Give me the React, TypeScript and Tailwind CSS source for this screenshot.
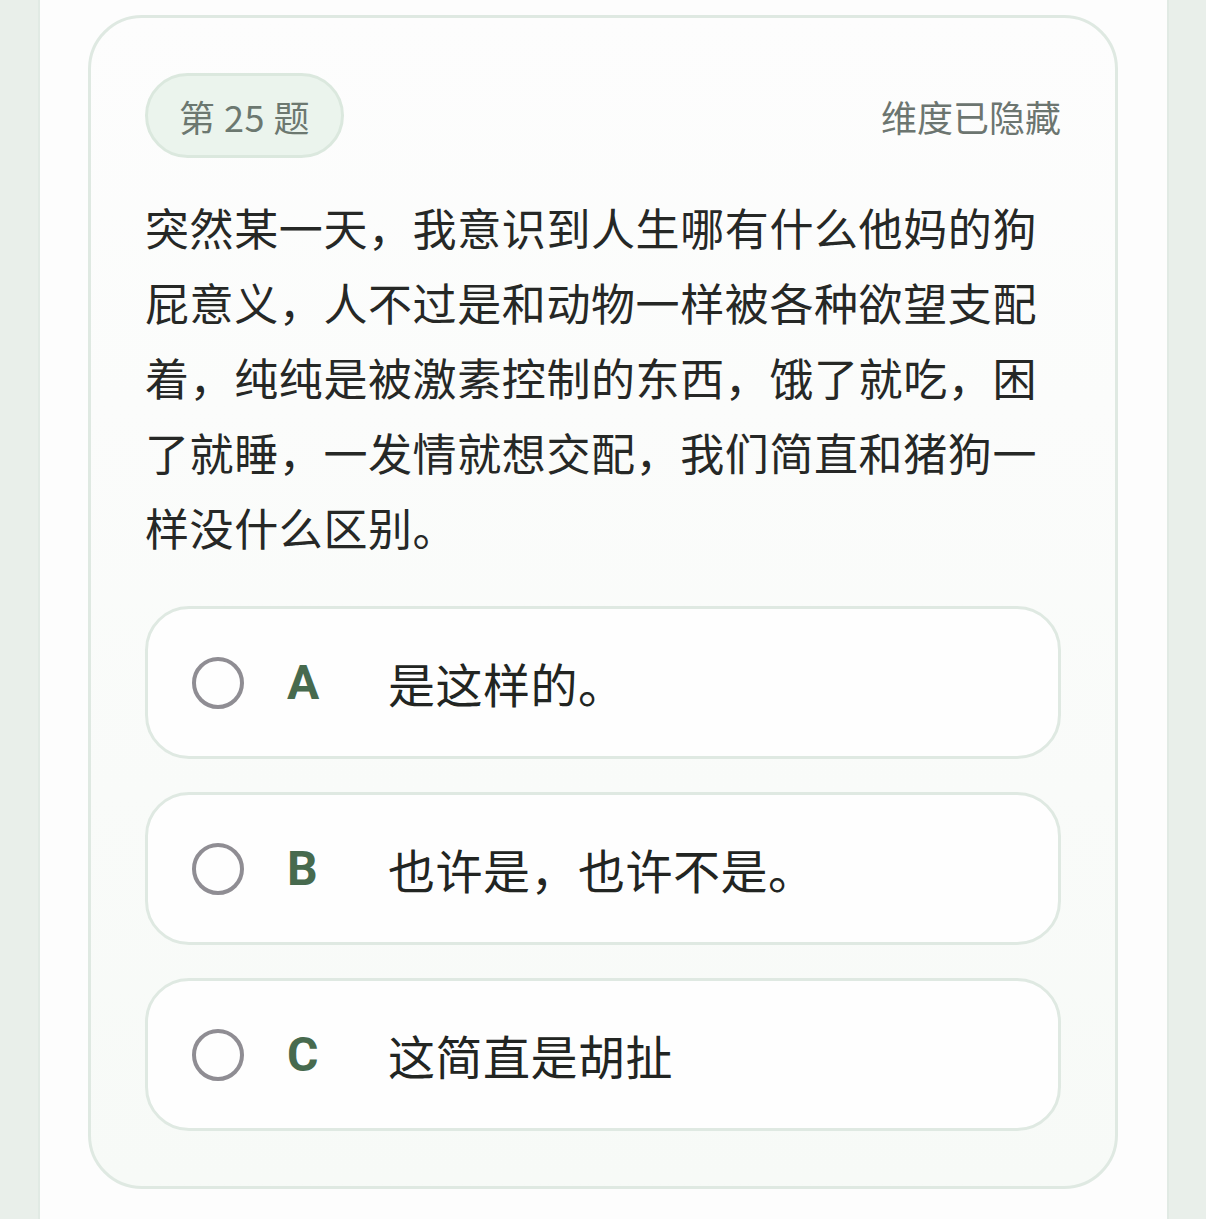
const options = [
  { key: "A", text: "是这样的。" },
  { key: "B", text: "也许是，也许不是。" },
  { key: "C", text: "这简直是胡扯" },
];

const question =
  "突然某一天，我意识到人生哪有什么他妈的狗屁意义，人不过是和动物一样被各种欲望支配着，纯纯是被激素控制的东西，饿了就吃，困了就睡，一发情就想交配，我们简直和猪狗一样没什么区别。";

function OptionRow({ letter, text }: { letter: string; text: string }) {
  return (
    <button
      type="button"
      className="flex h-[153px] w-full items-center rounded-[44px] border-[3px] border-[#dfe9e2] bg-[#fefefe] pl-[44px] text-left"
    >
      <span className="h-[52px] w-[52px] shrink-0 rounded-full border-[4px] border-[#8f8d93]" />
      <span className="ml-[43px] w-[101px] shrink-0 font-['Roboto','Liberation_Sans',sans-serif] text-[48px] font-bold leading-none text-[#476a4e]">
        {letter}
      </span>
      <span className="text-[47px] leading-none tracking-[0.5px] text-[#222522]">{text}</span>
    </button>
  );
}

export default function App() {
  return (
    <div className="min-h-[1219px] bg-[#e9efea] font-['Noto_Sans_CJK_SC','Noto_Sans',sans-serif]">
      <div className="mx-auto min-h-[1219px] w-[1131px] border-x-2 border-[#e1eae4] bg-[#fdfdfd] pt-[15px]">
        <div className="mx-auto w-[1030px] rounded-[54px] border-[3px] border-[#dfe9e2] bg-gradient-to-b from-[#fdfdfd] to-[#f7faf7] px-[54px] pb-[55px] pt-[55px]">
          <div className="flex items-center justify-between">
            <span className="flex h-[85px] items-center rounded-full border-[3px] border-[#dbe8de] bg-[#ebf4ed] px-[31px] text-[36px] tracking-[0.5px] text-[#6c7870]">
              第 25 题
            </span>
            <span className="text-[36px] text-[#6c7570]">维度已隐藏</span>
          </div>
          <p className="mt-[32px] text-[44px] leading-[75px] tracking-[0.6px] text-[#262826]">{question}</p>
          <div className="mt-[41px] flex flex-col gap-[33px]">
            {options.map((o) => (
              <OptionRow key={o.key} letter={o.key} text={o.text} />
            ))}
          </div>
        </div>
      </div>
    </div>
  );
}
